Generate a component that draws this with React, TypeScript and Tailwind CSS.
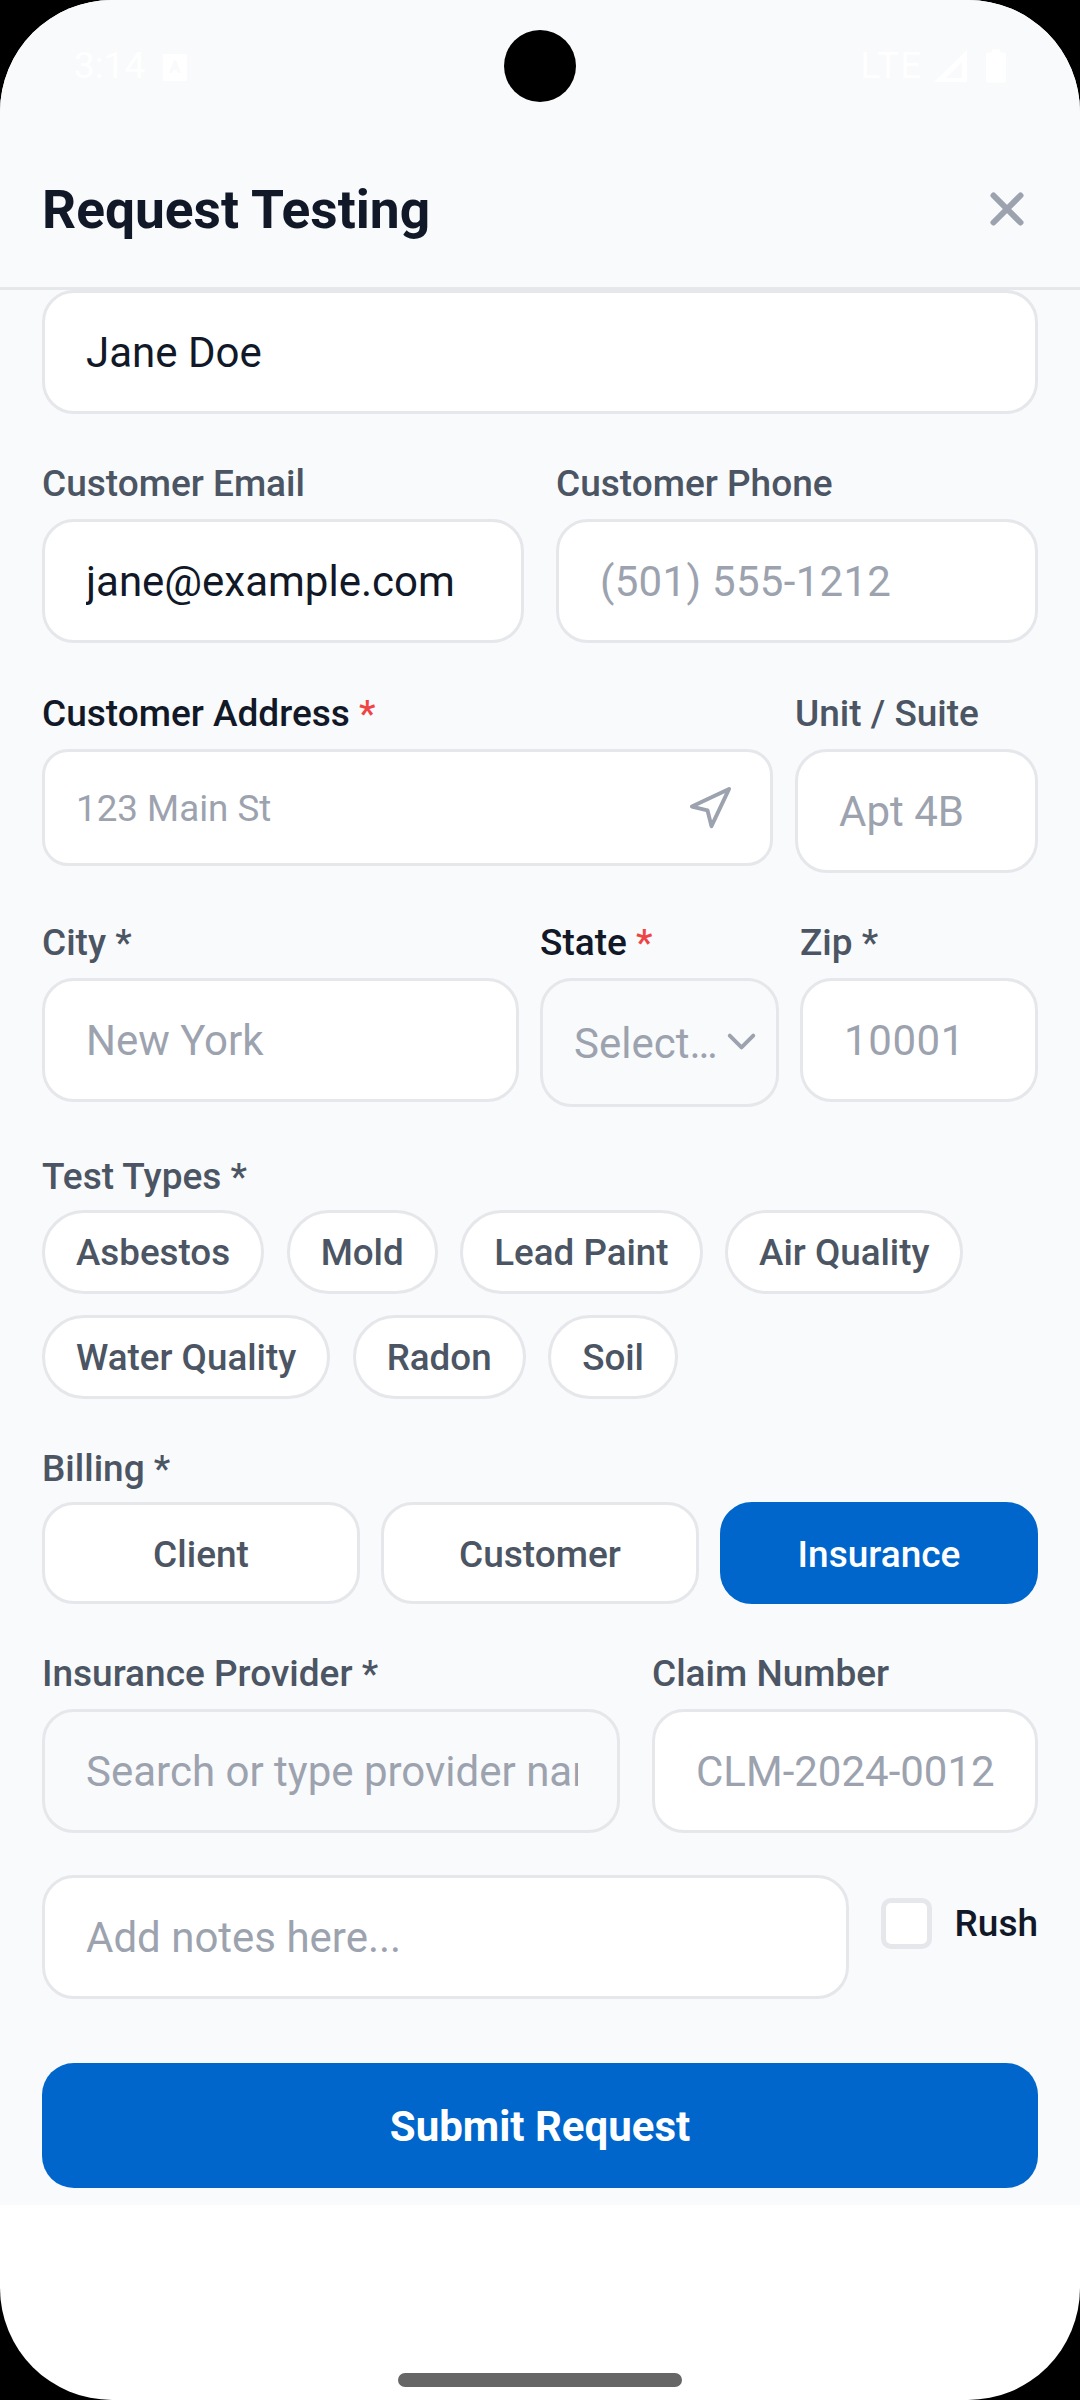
import { ChevronDown, Navigation, X } from "lucide-react";

const font = "font-['Roboto',sans-serif]";

function Label({ text, dark, red }: { text: string; dark?: boolean; red?: boolean }) {
  return (
    <div className={`h-[37px] pt-[2px] flex items-center text-[37px] leading-[37px] font-medium whitespace-nowrap ${dark ? "text-[#111827]" : "text-[#4b5563]"}`}>
      {text}
      {red && <span className="text-[#ef4444]">&nbsp;*</span>}
    </div>
  );
}

function Field({ text, value, gray, track = "" }: { text: string; value?: boolean; gray?: boolean; track?: string }) {
  return (
    <div className={`h-[124px] w-full rounded-[32px] border-[3px] border-[#e5e7eb] pl-[41px] pr-[39px] pt-[2px] flex items-center ${gray ? "bg-[#f9fafb]" : "bg-white"}`}>
      <span className={`block w-full overflow-hidden whitespace-nowrap text-[42px] leading-[52px] ${track} ${value ? "text-[#111827]" : "text-[#9ca3af]"}`}>{text}</span>
    </div>
  );
}

function Chip({ text }: { text: string }) {
  return (
    <div className="h-[84px] px-[31px] pt-[2px] rounded-full bg-white border-[3px] border-[#e5e7eb] flex items-center text-[36.75px] font-medium text-[#4b5563] whitespace-nowrap">
      {text}
    </div>
  );
}

function Bill({ text, on }: { text: string; on?: boolean }) {
  return (
    <div className={`flex-1 h-[102px] pt-[3px] rounded-[32px] border-[3px] flex items-center justify-center text-[37px] font-medium ${on ? "bg-[#0066cc] border-[#0066cc] text-white" : "bg-white border-[#e5e7eb] text-[#4b5563]"}`}>
      {text}
    </div>
  );
}

export default function App() {
  return (
    <div className={`w-[1080px] h-[2400px] bg-black ${font}`}>
      <div className="relative w-full h-full rounded-[112px] overflow-hidden bg-white flex flex-col">
        <div className="absolute left-1/2 top-[30px] -ml-[36px] w-[72px] h-[72px] rounded-full bg-black z-10" />
        <div className="h-[290px] shrink-0 bg-[#f9fafb] border-b-[3px] border-[#e5e7eb] flex flex-col">
          <div className="h-[110px] shrink-0 px-[74px] pt-[46px] flex justify-between text-white text-[37px] leading-[40px]">
            <div className="flex items-start gap-[18px]">
              <span>3:14</span>
              <svg width="24" height="27" viewBox="0 0 24 27" className="mt-[8px]">
                <path fill="currentColor" fillRule="evenodd" d="M1 0h22a1 1 0 0 1 1 1v25a1 1 0 0 1-1 1H1a1 1 0 0 1-1-1V1a1 1 0 0 1 1-1zm10 6L6 19h3l1-3h4l1 3h3L13 6h-2z" />
              </svg>
            </div>
            <div className="flex items-start gap-[12px]">
              <span className="tracking-[1.5px] -mr-[1px]">LTE</span>
              <svg width="33" height="32" viewBox="0 0 33 32" className="mt-[4px]">
                <path fill="currentColor" fillRule="evenodd" d="M33 0v32H0zM28 12 12 28h16z" />
              </svg>
              <svg width="20" height="34" viewBox="0 0 20 33" className="mt-[3px] ml-[7px]">
                <path fill="currentColor" d="M6 0h8v3h4a2 2 0 0 1 2 2v26a2 2 0 0 1-2 2H2a2 2 0 0 1-2-2V5a2 2 0 0 1 2-2h4z" />
              </svg>
            </div>
          </div>
          <div className="flex-1 px-[42px] flex items-start justify-between pt-[68px]">
            <h1 className="text-[53.3px] leading-[64px] font-bold text-[#111827]">Request Testing</h1>
            <X className="text-[#9ca3af] mr-[4px] mt-[4px]" size={54} strokeWidth={2.67} />
          </div>
        </div>

        <div className="bg-[#f9fafb] h-[1915px] shrink-0 px-[42px] flex flex-col">
          <Field text="Jane Doe" value />

          <div className="flex gap-[32px] mt-[50px]">
            <div className="flex-1 min-w-0 flex flex-col gap-[18px]">
              <Label text="Customer Email" />
              <Field text="jane@example.com" value />
            </div>
            <div className="flex-1 min-w-0 flex flex-col gap-[18px]">
              <Label text="Customer Phone" />
              <Field text="(501) 555-1212" track="tracking-[0.3px]" />
            </div>
          </div>

          <div className="flex gap-[22px] mt-[51px] items-start">
            <div className="w-[731px] shrink-0 flex flex-col gap-[18px]">
              <Label text="Customer Address" dark red />
              <div className="h-[117px] rounded-[26px] bg-white border-[3px] border-[#e5e7eb] pl-[31px] pr-[37px] pt-[2px] flex items-center justify-between">
                <span className="text-[36.75px] text-[#9ca3af]">123 Main St</span>
                <Navigation className="text-[#9ca3af]" size={47} strokeWidth={2} />
              </div>
            </div>
            <div className="flex-1 min-w-0 flex flex-col gap-[18px]">
              <Label text="Unit / Suite" />
              <Field text="Apt 4B" />
            </div>
          </div>

          <div className="flex gap-[21px] mt-[50px] items-start">
            <div className="w-[477px] shrink-0 flex flex-col gap-[18px]">
              <Label text="City *" />
              <Field text="New York" />
            </div>
            <div className="w-[239px] shrink-0 flex flex-col gap-[18px]">
              <Label text="State" dark red />
              <div className="h-[129px] rounded-[32px] bg-[#f9fafb] border-[3px] border-[#e5e7eb] pl-[31px] pr-[16px] pt-[2px] flex items-center justify-between">
                <span className="text-[42px] text-[#9ca3af] whitespace-nowrap">Select…</span>
                <ChevronDown className="text-[#9ca3af] shrink-0 -mt-[4px]" size={47} strokeWidth={2} />
              </div>
            </div>
            <div className="flex-1 min-w-0 flex flex-col gap-[18px]">
              <Label text="Zip *" />
              <Field text="10001" track="tracking-[0.6px]" />
            </div>
          </div>

          <div className="mt-[50px]">
            <Label text="Test Types *" />
            <div className="flex flex-wrap gap-x-[22.5px] gap-y-[21px] mt-[16px]">
              <Chip text="Asbestos" />
              <Chip text="Mold" />
              <Chip text="Lead Paint" />
              <Chip text="Air Quality" />
              <Chip text="Water Quality" />
              <Chip text="Radon" />
              <Chip text="Soil" />
            </div>
          </div>

          <div className="mt-[50px]">
            <Label text="Billing *" />
            <div className="flex gap-[21px] mt-[16px]">
              <Bill text="Client" />
              <Bill text="Customer" />
              <Bill text="Insurance" on />
            </div>
          </div>

          <div className="flex gap-[32px] mt-[50px]">
            <div className="w-[578px] shrink-0 flex flex-col gap-[18px]">
              <Label text="Insurance Provider *" />
              <Field text="Search or type provider name" gray />
            </div>
            <div className="flex-1 min-w-0 flex flex-col gap-[18px]">
              <Label text="Claim Number" />
              <Field text="CLM-2024-0012" />
            </div>
          </div>

          <div className="flex mt-[42px] items-start">
            <div className="w-[807px] shrink-0">
              <Field text="Add notes here..." />
            </div>
            <div className="flex-1 flex items-center justify-between pl-[32px] pt-[21px]">
              <div className="w-[51px] h-[51px] -mt-[1px] rounded-[10px] bg-white border-[5px] border-[#e5e7eb]" />
              <span className="text-[37px] font-medium text-[#111827]">Rush</span>
            </div>
          </div>

          <div className="mt-[64px] h-[125px] pt-[2px] rounded-[32px] bg-[#0066cc] flex items-center justify-center text-[42px] font-bold text-white">
            Submit Request
          </div>
        </div>

        <div className="flex-1 flex items-end justify-center pb-[13px]">
          <div className="w-[284px] h-[14px] rounded-full bg-[#666666]" />
        </div>
      </div>
    </div>
  );
}
